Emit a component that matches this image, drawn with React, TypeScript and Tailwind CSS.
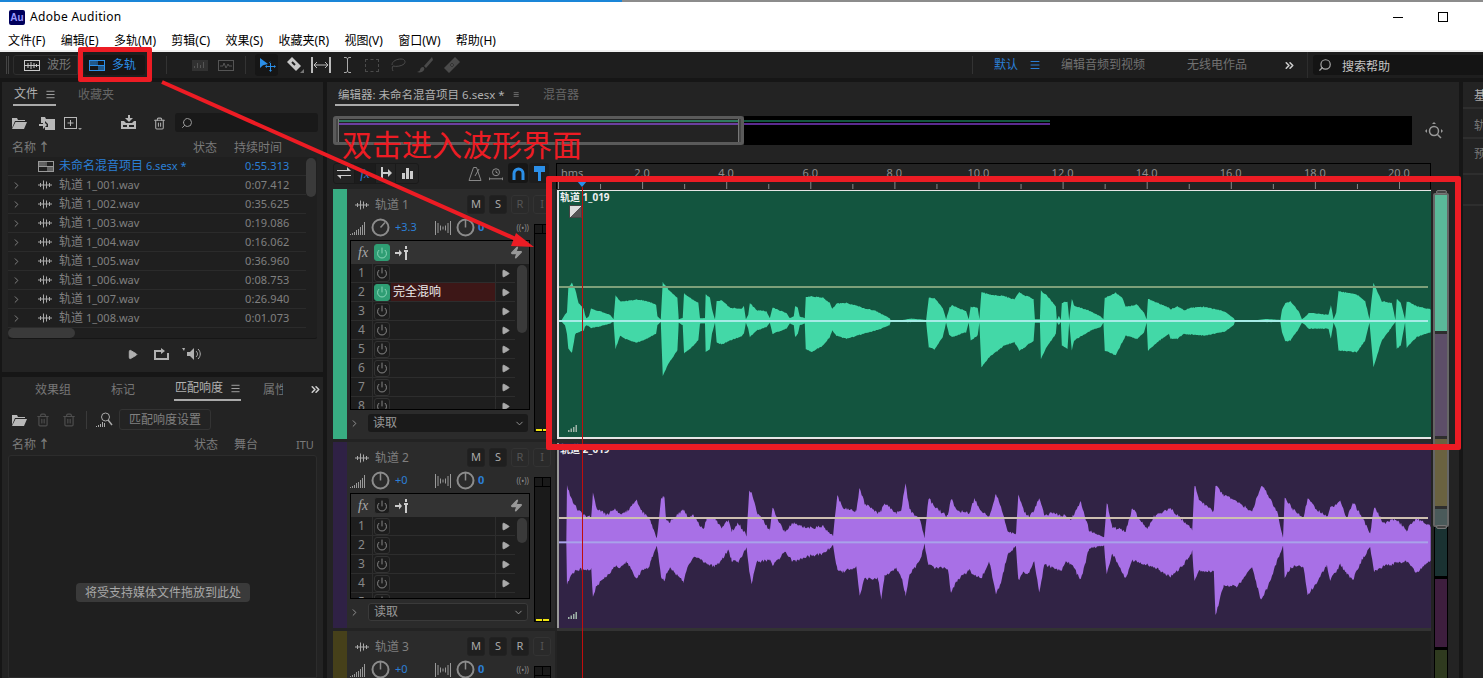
import { ChevronDown, ChevronRight, ChevronsRight, Menu, Play, Power, Search, Trash2, Zap } from "lucide-react";

const CJK = "font-['Noto_Sans','Noto_Sans_CJK_SC',sans-serif]";

const menus = ["文件(F)", "编辑(E)", "多轨(M)", "剪辑(C)", "效果(S)", "收藏夹(R)", "视图(V)", "窗口(W)", "帮助(H)"];

const files = [
  ["1_001.wav", "0:07.412"],
  ["1_002.wav", "0:35.625"],
  ["1_003.wav", "0:19.086"],
  ["1_004.wav", "0:16.062"],
  ["1_005.wav", "0:36.960"],
  ["1_006.wav", "0:08.753"],
  ["1_007.wav", "0:26.940"],
  ["1_008.wav", "0:01.073"],
];

const rulerLabels = ["2.0", "4.0", "6.0", "8.0", "10.0", "12.0", "14.0", "16.0", "18.0", "20.0"];

// envelope traced from the clip: [x, top, bottom], 3 units = 1px
const greenPts = [
  [12,153,153],[24,135,165],[30,130,190],[34,55,235],[45,40,248],[55,60,190],[65,100,185],[80,118,180],[84,135,170],[88,145,165],[96,140,168],[102,118,172],[130,125,168],[160,135,160],[170,148,155],[176,78,235],[190,95,195],[205,95,205],[240,90,217],[270,95,205],[298,105,190],[302,140,165],[312,148,155],[318,38,316],[335,60,280],[362,85,240],[366,148,158],[378,145,165],[382,72,248],[400,85,235],[425,100,210],[430,145,160],[445,145,160],[447,75,245],[460,85,235],[466,120,190],[475,148,158],[480,95,215],[495,92,222],[520,115,210],[555,118,198],[562,110,190],[568,148,158],[575,135,175],[580,100,200],[600,122,180],[630,125,170],[640,145,158],[648,115,190],[690,130,175],[700,145,160],[712,140,165],[716,110,200],[724,115,190],[730,140,165],[745,145,160],[748,82,235],[765,80,245],[800,85,225],[820,100,200],[828,118,180],[840,102,195],[870,100,205],[920,115,190],[960,125,180],[1000,145,165],[1003,150,156],[1040,150,156],[1065,146,156],[1110,150,156],[1118,85,230],[1135,85,237],[1160,115,200],[1170,148,158],[1180,115,195],[1188,108,200],[1230,125,185],[1238,148,158],[1244,112,210],[1265,115,195],[1270,148,158],[1276,68,290],[1300,75,260],
  [1345,80,225],[1375,90,215],[1390,68,240],[1400,75,235],[1433,88,210],[1437,148,158],[1452,148,158],[1455,63,265],[1475,80,225],[1500,110,190],[1503,150,156],[1509,138,165],[1515,150,156],[1518,100,225],[1535,97,235],[1540,150,158],[1548,88,240],[1555,108,210],[1605,125,180],[1635,140,170],[1643,148,158],[1647,85,240],[1680,70,255],[1700,85,215],[1710,112,195],[1745,105,205],[1765,130,185],[1773,148,158],[1777,88,240],[1805,100,215],[1840,115,190],[1845,120,205],[1865,110,205],[1885,122,190],[1905,115,192],[1945,112,195],[2005,125,185],[2035,145,165],[2038,150,156],[2105,150,156],[2135,147,156],[2175,150,156],[2180,120,185],[2190,100,213],[2205,96,210],[2230,125,175],[2240,148,158],[2250,140,165],[2260,130,175],[2320,135,175],[2327,108,205],[2335,148,158],[2343,128,175],[2350,65,240],[2405,75,245],[2430,95,210],[2443,148,158],[2455,40,290],[2480,95,210],[2510,100,170],[2521,150,156],[2525,88,235],[2537,100,225],[2550,148,158],[2555,95,232],[2585,110,200],[2628,120,185],
];

const purplePts = [
  [28,187,187],[30,25,305],[45,65,280],[60,90,265],[80,110,262],[103,118,262],[108,45,345],[120,90,310],[150,110,285],[175,90,255],[190,105,255],[210,100,240],[240,65,295],[255,100,265],[275,115,260],[285,140,230],[300,175,195],[304,150,215],[313,58,290],[323,55,295],[328,125,280],[340,130,260],[380,92,300],[395,120,250],[410,110,225],[440,155,240],[450,120,245],[475,120,255],[495,150,235],[515,125,205],[525,160,235],[545,135,240],[570,170,200],[578,40,270],[585,40,305],[600,100,240],[640,155,235],[648,88,250],[665,130,235],[685,160,210],[710,135,240],[750,150,225],[800,145,215],[830,170,195],[843,52,265],[860,90,270],[900,100,255],[910,28,345],[925,75,290],[965,105,290],[975,95,350],[985,75,285],[1020,105,260],[1035,95,285],[1048,15,340],[1060,95,280],[1090,120,240],[1105,175,190],[1117,60,250],[1140,90,260],[1175,115,260],[1185,60,335],[1200,95,300],[1240,105,265],[1255,60,280],[1275,100,290],[1300,115,240],
  [1320,45,340],[1335,85,300],[1355,160,220],[1380,165,195],[1387,50,295],[1405,100,270],[1420,115,275],[1435,95,240],[1450,60,335],[1465,110,250],[1485,105,255],[1515,110,270],[1530,115,240],[1545,125,245],[1575,70,295],[1600,155,200],[1645,175,195],[1653,70,280],[1670,145,215],[1710,160,290],[1730,90,235],[1775,155,250],[1795,115,255],[1845,90,285],[1880,125,255],[1910,155,210],[1917,18,300],[1930,65,265],[1975,100,270],[1980,20,400],[2005,50,310],[2045,70,315],[2090,100,255],[2117,20,358],[2135,45,320],[2165,100,240],[2183,175,195],[2188,55,285],[2210,90,255],[2245,120,255],[2257,58,340],[2280,90,310],[2315,115,250],[2325,90,295],[2355,70,250],[2375,120,275],[2393,70,295],[2425,125,225],[2445,165,200],[2457,85,270],[2485,135,255],[2520,120,245],[2555,155,240],[2585,120,275],[2628,145,235],
];

function noise(u: number) {
  return Math.abs(Math.sin(u * 12.9898) * 43758.5453) % 1;
}

function wavePath(pts: number[][], jitter: number) {
  const top: string[] = [];
  const bot: string[] = [];
  for (let i = 0; i < pts.length - 1; i++) {
    const [x0, t0, b0] = pts[i];
    const [x1, t1, b1] = pts[i + 1];
    for (let u = x0; u < x1; u += 3) {
      const k = (u - x0) / (x1 - x0);
      const t = t0 + (t1 - t0) * k;
      const b = b0 + (b1 - b0) * k;
      const room = Math.min(1, (b - t) / 60);
      top.push(`${u},${(t - noise(u) * jitter * room).toFixed(1)}`);
      bot.unshift(`${u},${(b + noise(u + 7) * jitter * room).toFixed(1)}`);
    }
  }
  return `M${top.join("L")}L${bot.join("L")}Z`;
}

function TrackWaveIcon({ className = "" }: { className?: string }) {
  return (
    <svg width="14" height="10" viewBox="0 0 14 10" className={className} stroke="currentColor" fill="none">
      <path d="M0 5h14M2.5 3v4M5.5 0.5v9M8.5 1.5v7M11.5 3v4" />
    </svg>
  );
}

function MultitrackIcon({ className = "" }: { className?: string }) {
  return (
    <svg width="16" height="11" viewBox="0 0 16 11" className={className}>
      <rect x="0.5" y="0.5" width="15" height="10" fill="none" stroke="currentColor" />
      <path d="M1 1h6v4H1zM9 6h6v4H9z" fill="currentColor" opacity="0.55" />
      <path d="M0 5.5h16M8 1v4.5" stroke="currentColor" />
    </svg>
  );
}

function WaveViewIcon() {
  return (
    <svg width="16" height="11" viewBox="0 0 16 11" className="text-[#c8c8c8]" fill="none" stroke="currentColor">
      <rect x="0.5" y="0.5" width="15" height="10" />
      <path d="M1 5.5h14M4 3v5M7 2v7M10 3v5M12.5 4v3" />
    </svg>
  );
}

function LevelIcon() {
  return (
    <svg width="15" height="14" viewBox="0 0 15 14" stroke="#999" fill="none">
      <path d="M0.5 14v-1M2.5 14v-2M4.5 14v-3M6.5 14v-5M8.5 14v-6M10.5 14v-8M12.5 14v-10M14.5 14v-13" />
    </svg>
  );
}

function PanIcon() {
  return (
    <svg width="16" height="14" viewBox="0 0 16 14" stroke="#999" fill="none">
      <path d="M0.5 0v14M3 2v10M5.5 4.5v5M8 5.5v3M10.5 4.5v5M13 2v10M15.5 0v14" />
    </svg>
  );
}

function Knob({ tilted }: { tilted?: boolean }) {
  return (
    <svg width="19" height="19" viewBox="0 0 19 19" fill="none" stroke="#8c8c8c" strokeWidth="2">
      <circle cx="9.5" cy="9.5" r="8" />
      <path d={tilted ? "M9.5 9.5l4.5-5" : "M9.5 1.5v8"} strokeWidth="1.5" />
    </svg>
  );
}

function GhostButton({ label, dim }: { label: string; dim?: boolean }) {
  return (
    <div
      className={`w-[18px] h-[19px] rounded-[3px] border flex items-center justify-center text-[11px] ${
        dim ? "border-[#333] text-[#555] bg-[#2a2a2a]" : "border-[#222] text-[#aaa] bg-[#1f1f1f]"
      }`}
    >
      {label}
    </div>
  );
}

function PowerButton({ on }: { on?: boolean }) {
  return (
    <div
      className={`w-[16px] h-[17px] rounded-[3px] border flex items-center justify-center ${
        on ? "bg-[#2f9e74] border-[#2f9e74] text-[#a6e5cc]" : "bg-[#1c1c1c] border-[#333] text-[#aaa]"
      }`}
    >
      <Power size={12} strokeWidth={1.5} />
    </div>
  );
}

function RackRow({ num, effect }: { num: number; effect?: string }) {
  return (
    <div className="h-[19px] flex items-center border-b border-[#2d2d2d] bg-[#1e1e1e]">
      <div className="w-[22px] h-full flex items-center justify-center text-[12px] text-[#888] border-r border-[#2d2d2d]">{num}</div>
      <div className="w-[18px] flex justify-center">
        <PowerButton on={!!effect} />
      </div>
      <div className={`w-[104px] h-[18px] text-[12px] leading-[18px] pl-[2px] text-[#eee] ${effect ? "bg-[#3d1717]" : ""}`}>{effect}</div>
      <div className="flex-1 h-full flex items-center justify-center border-l border-[#2d2d2d]">
        <Play size={9} className="text-[#aaa] fill-[#aaa]" />
      </div>
    </div>
  );
}

function Track({
  name,
  bar,
  gain,
  knobTilted,
  rows,
  rackHeight,
  thumb,
  meterHeight,
  fxOn,
  effectRow,
  selectBg,
  height,
  rDim,
}: {
  name: string;
  bar: string;
  gain: string;
  knobTilted?: boolean;
  rows: number;
  rackHeight: string;
  thumb: string;
  meterHeight: string;
  fxOn?: boolean;
  effectRow?: boolean;
  selectBg: string;
  height: string;
  rDim?: boolean;
}) {
  const numbers = Array.from({ length: rows }, (_, i) => i + 1);
  return (
    <div className={`flex overflow-hidden ${height}`}>
      <div className={`w-[14px] shrink-0 ${bar}`} />
      <div className="flex-1 bg-[#2b2b2b] pl-[3px] pr-[4px] pt-[6px]">
        <div className="flex items-center h-[19px]">
          <TrackWaveIcon className="ml-[5px] text-[#aaa]" />
          <span className="ml-[6px] text-[12px] text-[#7f7f7f]">{name}</span>
          <div className="ml-auto flex gap-[4px]">
            <GhostButton label="M" />
            <GhostButton label="S" />
            <GhostButton label="R" dim={rDim} />
            <GhostButton label="I" dim />
          </div>
        </div>
        <div className="flex mt-[4px]">
          <div className="w-[180px]">
            <div className="flex items-center h-[19px]">
              <LevelIcon />
              <span className="w-[6px]" />
              <Knob tilted={knobTilted} />
              <span className="ml-[5px] w-[40px] text-[11px] text-[#2b7fd6]">{gain}</span>
              <PanIcon />
              <span className="w-[5px]" />
              <Knob />
              <span className="ml-[3px] text-[11px] font-bold text-[#2b7fd6]">0</span>
              <span className="ml-auto mr-[1px] text-[8px] text-[#888]">((•))</span>
            </div>
            <div className={`mt-[3px] border border-black bg-[#2e2e2e] overflow-hidden ${rackHeight}`}>
              <div className="h-[23px] flex items-center bg-[#333] pl-[7px] pr-[6px]">
                <span className="w-[16px] text-[14px] italic font-['Liberation_Serif',serif] text-[#aaa]">fx</span>
                <PowerButton on={fxOn} />
                <svg width="14" height="14" viewBox="0 0 14 14" className="ml-[5px]" fill="#ccc">
                  <path d="M0 6h4V3.5L7 7l-3 3.500V8H0zM9 4h4v2h-1v8h-2V6H9zM10 0h2v3h-2z" />
                </svg>
                <Zap size={13} className="ml-auto text-[#999] fill-[#999]" />
              </div>
              <div className="flex bg-[#1e1e1e]">
                <div className="w-[164px]">
                  {numbers.map((n) => (
                    <RackRow key={n} num={n} effect={effectRow && n === 2 ? "完全混响" : undefined} />
                  ))}
                </div>
                <div className="flex-1 pt-[1px] pl-[2px] pr-[2px]">
                  <div className={`rounded-[5px] bg-[#3a3a3a] ${thumb}`} />
                </div>
              </div>
            </div>
            <div className="flex items-center mt-[4px]">
              <ChevronRight size={11} className="ml-[-1px] text-[#999]" />
              <div className={`ml-[8px] w-[160px] h-[18px] rounded-[3px] flex items-center justify-between pl-[5px] pr-[3px] text-[12px] text-[#999] ${selectBg}`}>
                读取
                <ChevronDown size={11} />
              </div>
            </div>
          </div>
          <div className={`ml-[4px] w-[17px] mt-[6px] border border-black bg-[#1a1a1a] flex flex-col ${meterHeight}`}>
            <div className="h-[9px] flex border-b border-black">
              <div className="flex-1 border-r border-black" />
              <div className="flex-1" />
            </div>
            <div className="mt-auto flex gap-[1px] px-[1px]">
              <div className="flex-1 h-[2px] bg-[#f2e611]" />
              <div className="flex-1 h-[2px] bg-[#f2e611]" />
            </div>
          </div>
        </div>
      </div>
    </div>
  );
}

function Clip({
  title,
  height,
  bg,
  border,
  d,
  fill,
  viewBox,
  topLine,
  midLine,
  topColor,
  midColor,
  cornerBars,
  children,
}: {
  title: string;
  height: string;
  bg: string;
  border: string;
  d: string;
  fill: string;
  viewBox: string;
  topLine: number;
  midLine: number;
  topColor: string;
  midColor: string;
  cornerBars: number;
  children?: React.ReactNode;
}) {
  return (
    <div className={`relative overflow-hidden ${height} ${bg} ${border}`}>
      <svg className="absolute inset-0 w-full h-full" viewBox={viewBox} preserveAspectRatio="none">
        <path d={d} fill={fill} />
        <rect x="6" y={topLine - 3} width="2613" height="6" fill={topColor} />
        <rect x="6" y={midLine - 3} width="2613" height="6" fill={midColor} />
      </svg>
      <div className="relative pl-[1px] text-[10px] leading-[13px] font-bold text-[#f0f0f0]">{title}</div>
      {children}
      <svg width="10" height="8" viewBox="0 0 10 8" fill="#9fb3a8" className="absolute left-[9px]" style={{ bottom: cornerBars }}>
        <path d="M0 6h1.500v2H0zM2.500 4.500H4V8H2.500zM5 3h1.500v5H5zM7.500 1H9v7H7.500z" />
      </svg>
    </div>
  );
}

export default function App() {
  const greenD = wavePath(greenPts, 3);
  const purpleD = wavePath(purplePts, 10);

  return (
    <div className={`relative w-[1483px] h-[678px] overflow-hidden bg-[#161616] flex flex-col ${CJK}`}>
      {/* window frame */}
      <div className="h-[2px] flex">
        <div className="w-[622px] bg-[#1a86d8]" />
        <div className="flex-1 bg-[#8c8c8c]" />
      </div>
      <div className="h-[30px] bg-white flex items-center pl-[9px]">
        <div className="w-[16px] h-[15px] rounded-[2px] bg-[#00005b] text-[#9999ff] text-[10px] font-bold leading-[15px] text-center font-['Liberation_Sans',sans-serif]">Au</div>
        <span className="ml-[5px] text-[12px] text-black tracking-[0.3px]">Adobe Audition</span>
        <div className="ml-auto w-[10px] h-[1px] bg-black" />
        <div className="ml-[35px] mr-[35px] w-[10px] h-[10px] border border-black" />
      </div>
      <div className="h-[18px] bg-white flex items-center gap-[15.300px] pl-[8px] text-[12px] text-black">
        {menus.map((m) => (
          <span key={m}>{m}</span>
        ))}
      </div>
      <div className="h-[2px] bg-[#f0f0f0]" />

      {/* toolbar */}
      <div className="h-[26px] bg-[#1e1e1e] flex items-center text-[12px]">
        <div className="ml-[6px] w-[3px] h-[18px] border-x border-[#444]" />
        <div className="ml-[4px] w-[65px] h-[20px] rounded-l-[3px] border border-[#2e2e2e] flex items-center pl-[10px] text-[#777]">
          <WaveViewIcon />
          <span className="ml-[7px]">波形</span>
        </div>
        <div className="ml-[6px] w-[61px] h-[20px] rounded-[3px] bg-[#161616] flex items-center pl-[5px] text-[#2b8fe8]">
          <MultitrackIcon />
          <span className="ml-[7px]">多轨</span>
        </div>
        <div className="ml-[21px] w-[1px] h-[18px] bg-[#333]" />
        <svg width="16" height="11" viewBox="0 0 16 11" className="ml-[25px] text-[#555]" fill="currentColor">
          <path d="M0 0h16v11H0z" opacity="0.35" />
          <path d="M2 6h1v2H2zM5 3h1v5H5zM8 5h1v3H8zM11 2h1v6h-1z" />
        </svg>
        <svg width="16" height="11" viewBox="0 0 16 11" className="ml-[10px] text-[#555]" fill="none" stroke="currentColor">
          <rect x="0.5" y="0.5" width="15" height="10" />
          <path d="M2 6h3l1-3 2 5 2-4 1 2h3" />
        </svg>
        <div className="ml-[11px] w-[1px] h-[18px] bg-[#333]" />
        <div className="ml-[9px] w-[23px] h-[22px] rounded-[3px] bg-[#161616] flex items-center justify-center">
          <svg width="18" height="16" viewBox="0 0 18 16" fill="#2b8fe8">
            <path d="M2 1l8 6-5 1.200L2 11z" />
            <path d="M12 6h1v3h3V8l2 1.500L16 11v-1h-3v3h1l-1.500 2L11 13h1v-3H9v1L7 9.500 9 8v1h3V6h-1l1.500-2z" />
          </svg>
        </div>
        <svg width="18" height="18" viewBox="0 0 18 18" className="ml-[8px]" fill="#c8c8c8">
          <path d="M1 6l5-5 9 9-5 5z" />
          <path d="M6 6l3 3" stroke="#1e1e1e" strokeWidth="2" />
          <path d="M16 15l2-2v4h-4z" fill="#777" />
        </svg>
        <svg width="20" height="16" viewBox="0 0 20 16" className="ml-[7px]" fill="none" stroke="#bbb">
          <path d="M1 0v16M19 0v16" strokeWidth="2" />
          <path d="M3 8h14M6 5L3 8l3 3M14 5l3 3-3 3" />
        </svg>
        <svg width="9" height="16" viewBox="0 0 9 16" className="ml-[12px]" fill="none" stroke="#aaa">
          <path d="M1 0.500h2.500L4.500 2l1-1.500H8M4.500 2v12M1 15.500h2.500l1-1.500 1 1.500H8" />
        </svg>
        <div className="ml-[13px] w-[14px] h-[13px] border border-dashed border-[#4a4a4a]" />
        <svg width="17" height="15" viewBox="0 0 17 15" className="ml-[11px]" fill="none" stroke="#4a4a4a">
          <path d="M2 7c0-4 5-6 9-6s5 3 3 5-8 3-11 2c-1 1-1 3 0 5" />
        </svg>
        <svg width="16" height="16" viewBox="0 0 16 16" className="ml-[10px]" fill="#4a4a4a">
          <path d="M15 0L7 9l2 2 7-8zM6 10c-2 0-3 2-3 3s-1 1-3 2c3 1 6 0 7-2 1-1 0-3-1-3z" />
        </svg>
        <svg width="16" height="16" viewBox="0 0 16 16" className="ml-[11px]" fill="#4a4a4a">
          <path d="M11 0l5 5L5 16l-5-5z" />
          <path d="M6 8h1M9 8h1M8 6v1M8 9v1" stroke="#1e1e1e" />
        </svg>
        <div className="ml-[512px] w-[1px] h-[18px] bg-[#333]" />
        <span className="ml-[21px] text-[#2b7fd6]">默认</span>
        <Menu size={12} className="ml-[11px] text-[#2b7fd6]" />
        <span className="ml-[20px] text-[#717171]">编辑音频到视频</span>
        <span className="ml-[42px] text-[#717171]">无线电作品</span>
        <ChevronsRight size={13} strokeWidth={3} className="ml-[36px] text-[#ccc]" />
        <div className="ml-[11px] w-[1px] h-[26px] bg-[#2d2d2d]" />
        <div className="ml-[5px] flex-1 h-[20px] rounded-l-[3px] bg-[#141414] flex items-center pl-[5px] text-[#c4c4c4]">
          <Search size={14} className="-scale-x-100 text-[#aaa]" />
          <span className="ml-[10px] mt-[3px]">搜索帮助</span>
        </div>
      </div>

      {/* workspace */}
      <div className="mt-[4px] h-[596px] flex">
        {/* left column */}
        <div className="ml-[2px] w-[321px] flex flex-col text-[11px]">
          <div className="h-[290px] bg-[#232323] flex flex-col">
            <div className="h-[26px] flex items-start pl-[11px] text-[12px]">
              <div className="w-[43px] h-[24px] pt-[2px] border-b-2 border-[#aaa] flex items-center pl-[1px] text-[#b0b0b0] whitespace-nowrap">
                文件
                <Menu size={11} className="ml-[7px] shrink-0 text-[#aaa]" />
              </div>
              <span className="ml-[22px] mt-[4px] text-[#666]">收藏夹</span>
            </div>
            <div className="mt-[5px] h-[19px] flex items-center text-[#aaa]">
              <svg width="15" height="12" viewBox="0 0 15 12" className="ml-[10px] mt-[1px]" fill="#b8b8b8">
                <path d="M0 1h5l1 2h7v1H3L0 11zM3.500 5H15l-3 7H0z" />
              </svg>
              <svg width="16" height="13" viewBox="0 0 16 13" className="ml-[12px] mt-[1px]" fill="#b8b8b8">
                <path d="M2 0h4l1 2h9v11H6v-3h3V7L6 4v2H2z" />
                <path d="M0 7h4V4l4 4-4 4V9H0z" />
              </svg>
              <svg width="18" height="13" viewBox="0 0 18 13" className="ml-[9px] mt-[1px]" fill="none" stroke="#b8b8b8">
                <rect x="0.500" y="0.500" width="12" height="11" />
                <path d="M3.500 6h6M6.500 3v6" />
                <path d="M14 11h4l-2 2z" fill="#999" stroke="none" />
              </svg>
              <svg width="20" height="16" viewBox="0 0 20 16" className="ml-[38px]" fill="#b8b8b8">
                <path d="M8 0h2v3h3l-4 4-4-4h3z" />
                <path d="M1 6h3l2 2h6l2-2h2v8H1zM3 10h4v2H3zM9 10h5v2H9z" fillRule="evenodd" />
              </svg>
              <Trash2 size={13} className="ml-[13px] mt-[1px] text-[#aaa]" />
              <div className="ml-[9px] w-[143px] h-[19px] rounded-[3px] bg-[#191919] flex items-center pl-[6px]">
                <Search size={12} className="-scale-x-100 text-[#999]" />
              </div>
            </div>
            <div className="mt-[6px] h-[19px] flex items-center text-[12px] text-[#7a7a7a]">
              <span className="ml-[10px] w-[181px]">
                名称<span className="ml-[2px] font-bold">↑</span>
              </span>
              <span className="w-[41px]">状态</span>
              <span>持续时间</span>
            </div>
            <div className="ml-[6px] w-[309px] h-[182px] rounded-[2px] border-b border-[#161616] bg-[#1f1f1f] flex flex-wrap content-start">
              <div className="w-[298px] h-[171px] overflow-hidden">
                <div className="h-[19px] flex items-center border-b border-[#2b2b2b]">
                  <MultitrackIcon className="ml-[30px] text-[#999]" />
                  <span className="ml-[5px] w-[186px] text-[#2b7fd6]">
                    <span className="text-[12px]">未命名混音项目</span> 6.sesx *
                  </span>
                  <span className="text-[#2b7fd6] tracking-[0.1px]">0:55.313</span>
                </div>
                {files.map(([file, time]) => (
                  <div key={file} className="h-[19px] flex items-center border-b border-[#2b2b2b] text-[#808080]">
                    <ChevronRight size={11} className="ml-[3px] text-[#888]" />
                    <TrackWaveIcon className="ml-[16px] text-[#aaa]" />
                    <span className="ml-[7px] w-[186px]">
                      <span className="text-[12px]">轨道</span> {file}
                    </span>
                    <span className="tracking-[0.1px]">{time}</span>
                  </div>
                ))}
              </div>
              <div className="w-[11px] pt-[1px]">
                <div className="w-[10px] h-[39px] rounded-[5px] bg-[#3a3a3a]" />
              </div>
              <div className="w-[67px] h-[10px] rounded-[5px] bg-[#3a3a3a]" />
            </div>
            <div className="mt-[8px] flex items-center text-[#b0b0b0]">
              <Play size={11} className="ml-[125px] fill-[#b0b0b0]" />
              <svg width="15" height="12" viewBox="0 0 15 12" className="ml-[16px]" fill="#b0b0b0">
                <path d="M0 2h7V0l4 3-4 3V4H2v6h11V5h2v7H0z" />
              </svg>
              <svg width="20" height="14" viewBox="0 0 20 14" className="ml-[13px]" fill="#b0b0b0">
                <path d="M0 1l3 0-1 3zM5 5h3l4-4v12l-4-4H5z" />
                <path d="M14 4c2 2 2 4 0 6M16 2c3 3 3 7 0 10" fill="none" stroke="#b0b0b0" />
              </svg>
            </div>
          </div>

          <div className="mt-[5px] flex-1 bg-[#232323] flex flex-col">
            <div className="h-[25px] flex items-start text-[12px] text-[#777]">
              <span className="ml-[33px] mt-[4px]">效果组</span>
              <span className="ml-[40px] mt-[4px]">标记</span>
              <div className="ml-[39px] w-[67px] h-[24px] border-b-2 border-[#aaa] flex items-center pl-[1px] text-[#b0b0b0] whitespace-nowrap">
                匹配响度
                <Menu size={11} className="ml-[7px] shrink-0 text-[#aaa]" />
              </div>
              <span className="ml-[22px] mt-[4px] w-[20px] overflow-hidden whitespace-nowrap">属性</span>
              <ChevronsRight size={13} strokeWidth={3} className="ml-[26px] mt-[6px] text-[#ccc]" />
            </div>
            <div className="mt-[7px] h-[21px] flex items-center">
              <svg width="15" height="12" viewBox="0 0 15 12" className="ml-[10px]" fill="#b8b8b8">
                <path d="M0 1h5l1 2h7v1H3L0 11zM3.500 5H15l-3 7H0z" />
              </svg>
              <Trash2 size={14} className="ml-[9px] text-[#4e4e4e]" />
              <Trash2 size={14} className="ml-[12px] text-[#4e4e4e]" />
              <div className="ml-[10px] w-[1px] h-[18px] bg-[#3a3a3a]" />
              <svg width="17" height="15" viewBox="0 0 17 15" className="ml-[9px]" fill="none" stroke="#aaa">
                <circle cx="9.500" cy="5" r="4" />
                <path d="M12 8l4 5" strokeWidth="1.500" />
                <path d="M0.500 15v-1M2.500 15v-2M4.500 15v-3M6.500 15v-5M8.500 15v-4" />
              </svg>
              <div className="ml-[6px] w-[92px] h-[21px] rounded-[3px] border border-[#333] flex items-center justify-center text-[12px] text-[#808080]">匹配响度设置</div>
            </div>
            <div className="mt-[5px] h-[20px] flex items-center text-[12px] text-[#7a7a7a]">
              <span className="ml-[10px] w-[182px]">
                名称<span className="ml-[2px] font-bold">↑</span>
              </span>
              <span className="w-[40px]">状态</span>
              <span className="w-[62px]">舞台</span>
              <span className="text-[11px]">ITU</span>
            </div>
            <div className="ml-[6px] w-[309px] flex-1 rounded-t-[3px] border border-[#2c2c2c] bg-[#1f1f1f] flex items-center justify-center">
              <div className="h-[19px] w-[174px] mt-[51px] ml-[1px] rounded-[4px] bg-[#3a3a3a] text-center text-[12px] leading-[19px] text-[#a8a8a8]">将受支持媒体文件拖放到此处</div>
            </div>
          </div>
        </div>

        {/* editor */}
        <div className="ml-[4px] w-[1132px] bg-[#232323] flex flex-col">
          <div className="h-[26px] flex items-start text-[12px]">
            <div className="ml-[8px] w-[184px] h-[24px] pt-[3px] border-b-2 border-[#aaa] flex items-center pl-[3px] text-[#b0b0b0] text-[11.500px] whitespace-nowrap">
              编辑器: 未命名混音项目 6.sesx *
              <Menu size={11} className="ml-[8px] text-[#aaa]" />
            </div>
            <span className="ml-[24px] mt-[4px] text-[#666]">混音器</span>
          </div>
          <div className="mt-[8px] h-[29px] flex items-center">
            <div className="ml-[6px] w-[411px] h-full rounded-[3px] border-[3px] border-[#5a5a5a] bg-[#232323] flex">
              <div className="w-[3px] h-full bg-[#444] border-r border-[#777]" />
              <div className="flex-1 pt-[1px]">
                <div className="h-[2px] bg-[#2f7a5f]" />
                <div className="mt-[1px] h-[2px] bg-[#6b3fa0]" />
              </div>
              <div className="w-[3px] h-full bg-[#444] border-l border-[#777]" />
            </div>
            <div className="w-[668px] h-full bg-black pt-[4px]">
              <div className="w-[306px] h-[2px] bg-[#13553f]" />
              <div className="mt-[1px] w-[306px] h-[2px] bg-[#5b2a90]" />
            </div>
            <svg width="18" height="18" viewBox="0 0 18 18" className="ml-[13px]" fill="none" stroke="#999" strokeWidth="1.500">
              <circle cx="9" cy="9" r="4.500" />
              <path d="M12.500 12.500l3.500 3.500" />
              <path d="M9 0l2 2H7zM0 9l2-2v4zM18 9l-2-2v4z" fill="#999" stroke="none" />
            </svg>
          </div>

          <div className="mt-[18px] h-[26px] flex">
            <div className="w-[229px] flex items-start">
              <div className="ml-[6px] h-[21px] flex rounded-[3px] border border-[#1a1a1a] text-[#ccc]">
                <div className="w-[21px] flex items-center justify-center border-r border-[#1a1a1a]">
                  <svg width="14" height="13" viewBox="0 0 14 13" fill="#ccc">
                    <path d="M0 3h10V0l4 4H0zM14 9H4v3L0 8h14z" />
                  </svg>
                </div>
                <div className="w-[21px] flex items-center justify-center border-r border-[#1a1a1a] bg-[#1c1c1c] italic text-[13px] text-[#2b7fd6] font-['Liberation_Serif',serif]">fx</div>
                <div className="w-[20px] flex items-center justify-center border-r border-[#1a1a1a]">
                  <svg width="12" height="14" viewBox="0 0 12 14" fill="#ccc">
                    <path d="M1 0h2v14H1zM3 5h5V2l4 4-4 4V7H3z" />
                  </svg>
                </div>
                <div className="w-[22px] flex items-end justify-center gap-[1px] pb-[4px]">
                  <div className="w-[3px] h-[6px] bg-[#ccc]" />
                  <div className="w-[3px] h-[11px] bg-[#ccc]" />
                  <div className="w-[3px] h-[8px] bg-[#ccc]" />
                </div>
              </div>
              <svg width="14" height="14" viewBox="0 0 13 14" className="ml-[49px] mt-[4px]" fill="none" stroke="#888">
                <path d="M5 0.500h3L12.500 13.500H0.500zM6.500 9l4-7" />
              </svg>
              <svg width="14" height="14" viewBox="0 0 16 14" className="ml-[7px] mt-[4px]" fill="none" stroke="#999">
                <circle cx="8" cy="5" r="4" />
                <path d="M8 3v2l2 1M0.500 11v3M15.500 11v3M1 12.500h14" />
              </svg>
              <div className="ml-[5px] w-[20px] h-[20px] rounded-[3px] bg-[#161616] flex items-center justify-center">
                <svg width="13" height="13" viewBox="0 0 13 13" fill="none" stroke="#2b8fe8" strokeWidth="3">
                  <path d="M2 13V6.500a4.500 4.500 0 0 1 9 0V13" />
                </svg>
              </div>
              <div className="ml-[1px] w-[20px] h-[20px] rounded-[3px] bg-[#1d1d1d] flex items-center justify-center">
                <svg width="11" height="15" viewBox="0 0 11 15" fill="#2b8fe8">
                  <path d="M0 0h11v6H7v9H4V6H0z" />
                </svg>
              </div>
            </div>
            <div className="w-[875px] border-t border-l border-r border-black">
              <div className="h-[18px] flex items-center text-[11px] text-[#8e8e8e] overflow-hidden">
                <div className="w-[43px] shrink-0 pl-[4px]">hms</div>
                {rulerLabels.map((l) => (
                  <div key={l} className="w-[84.100px] shrink-0 text-center">
                    {l}
                  </div>
                ))}
              </div>
              <svg width="873" height="7" className="block" stroke="#888">
                {Array.from({ length: 21 }, (_, i) => (
                  <line key={i} x1={1.5 + i * 42.05} x2={1.5 + i * 42.05} y1={i % 2 ? 2 : 0} y2={7} />
                ))}
              </svg>
            </div>
          </div>

          <div className="flex-1 flex overflow-hidden">
            <div className="ml-[6px] w-[222px] flex flex-col gap-[3px]">
              <Track
                name="轨道 1"
                bar="bg-[#38ac82]"
                gain="+3.3"
                knobTilted
                rows={8}
                rackHeight="h-[170px]"
                thumb="h-[68px]"
                meterHeight="h-[208px]"
                fxOn
                effectRow
                selectBg="bg-[#1a1a1a]"
                height="h-[250px]"
                rDim
              />
              <Track
                name="轨道 2"
                bar="bg-[#2f2145]"
                gain="+0"
                rows={5}
                rackHeight="h-[106px]"
                thumb="h-[25px]"
                meterHeight="h-[145px]"
                selectBg="bg-[#222] border border-[#3a3a3a]"
                height="h-[186px]"
                rDim
              />
              <Track
                name="轨道 3"
                bar="bg-[#46401a]"
                gain="+0"
                rows={1}
                rackHeight="h-[106px]"
                thumb="h-[25px]"
                meterHeight="h-[145px]"
                selectBg="bg-[#222]"
                height="h-[47px]"
              />
            </div>
            <div className="ml-[2px] w-[874px] flex flex-col">
              <Clip
                title="轨道 1_019"
                height="h-[249px] mt-[1px]"
                bg="bg-[#13553f]"
                border="border-t border-l-2 border-b-2 border-[#e6e6e6]"
                d={greenD}
                fill="#43d8a7"
                viewBox={`6 ${(191 - 270) * 3} 2622 ${246 * 3}`}
                topLine={51}
                midLine={153}
                topColor="#7da07a"
                midColor="#a6ebe6"
                cornerBars={5}
              >
                <div className="relative ml-[10px] mt-[1px] w-[13px] h-[13px] border border-[#444] bg-[linear-gradient(135deg,#ddd_50%,#555_50%)]" />
              </Clip>
              <div className="h-[4px] bg-[#2b2b2b]" />
              <Clip
                title="轨道 2_019"
                height="h-[185px]"
                bg="bg-[#312345]"
                border="border-l-2 border-[#999]"
                d={purpleD}
                fill="#a870e6"
                viewBox={`6 ${(443 - 480) * 3} 2622 ${185 * 3}`}
                topLine={114}
                midLine={187}
                topColor="#cdbfb0"
                midColor="#a9a2ea"
                cornerBars={9}
              />
              <div className="h-[3px] bg-[#333]" />
              <div className="flex-1 bg-[#1f1f1f]" />
            </div>
            <div className="ml-[2px] w-[16px] flex flex-col">
              <div className="mx-auto mt-[1px] w-[11px] h-[4px] mb-[-1px] relative rounded-[2px] border border-[#777] bg-[#444]" />
              <div className="h-[334px] rounded-[2px] border-x-2 border-y-2 border-[#666] flex flex-col">
                <div className="h-[136px] bg-[#5ab999]" />
                <div className="h-[3px] bg-[#2e2e2e]" />
                <div className="h-[102px] bg-[#5d4e68]" />
                <div className="h-[3px] bg-[#2e2e2e]" />
                <div className="h-[67px] bg-[#6a6240]" />
                <div className="h-[3px] bg-[#2e2e2e]" />
                <div className="flex-1 bg-[#4a5a5a]" />
              </div>
              <div className="mx-auto w-[11px] h-[4px] mt-[-2px] mb-[-2px] relative rounded-[2px] border border-[#777] bg-[#444]" />
              <div className="flex-1 mx-[1px] border-x border-black flex flex-col gap-[3px] bg-black">
                <div className="h-[49px] bg-[#1a3232]" />
                <div className="h-[68px] bg-[#3e1e3e]" />
                <div className="flex-1 bg-[#2f3a1f]" />
              </div>
            </div>
          </div>
        </div>

        {/* right panel, cut off by the window */}
        <div className="ml-[4px] flex-1 bg-[#232323] text-[12px] text-[#777] overflow-hidden flex flex-col">
          <div className="h-[27px] pl-[11px] pt-[5px] border-b-2 border-[#2e2e2e] text-[#aaa] whitespace-nowrap">基本</div>
          <div className="h-[30px] pl-[11px] pt-[8px] border-b-2 border-[#2e2e2e] whitespace-nowrap">轨道</div>
          <div className="h-[36px] pl-[11px] pt-[6px] border-b-2 border-[#2e2e2e] whitespace-nowrap">预设</div>
          <div className="h-[31px] border-b-2 border-[#2e2e2e]" />
        </div>
      </div>

      {/* playhead */}
      <div className="absolute left-[582px] top-[187px] bottom-0 w-[1px] bg-[#c00d0d]" />
      <div className="absolute left-[577px] top-[181px] w-0 h-0 border-x-[5px] border-x-transparent border-t-[6px] border-t-[#2b8fe8]" />

      {/* annotations drawn on the screenshot */}
      <div className="absolute left-[78px] top-[47px] w-[74px] h-[35px] rounded-[2px] border-[5px] border-[#ed1c24]" />
      <div className="absolute left-[546px] top-[176px] w-[915px] h-[274px] rounded-[2px] border-[6px] border-[#ed1c24]" />
      <svg className="absolute left-[160px] top-[78px]" width="380" height="175" viewBox="0 0 380 175">
        <path d="M2 4L358 162" stroke="#ed1c24" strokeWidth="4" />
        <path d="M374 169L356 155L351 168z" fill="#ed1c24" />
      </svg>
      <div className="absolute left-[342px] top-[121px] text-[30px] leading-[44px] text-[#ed1c24] font-['Noto_Sans_CJK_SC',sans-serif] whitespace-nowrap">双击进入波形界面</div>
    </div>
  );
}
